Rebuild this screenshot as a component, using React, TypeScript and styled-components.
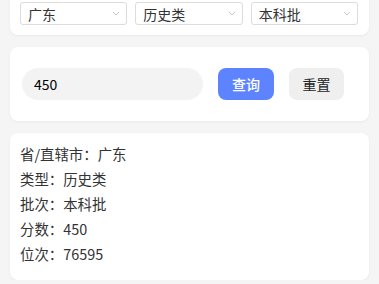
import styled, { createGlobalStyle } from "styled-components";

const GlobalStyle = createGlobalStyle`
  html, body {
    margin: 0;
    padding: 0;
    background: #f5f5f5;
    font-family: "Noto Sans CJK SC", "Noto Sans", sans-serif;
    color: #333;
  }
`;

const Page = styled.div`
  display: flex;
  flex-direction: column;
  gap: 12px;
  padding: 0 10px;
  margin-top: -8px;
`;

const Card = styled.div<{ $pad: string }>`
  background: #fff;
  border-radius: 8px;
  padding: ${({ $pad }) => $pad};
  box-shadow: 0 1px 3px rgba(0, 0, 0, 0.05);
`;

const SelectRow = styled.div`
  display: flex;
  gap: 8px;
`;

const Select = styled.div`
  flex: 1;
  height: 23px;
  box-sizing: border-box;
  border: 1px solid #dcdcdc;
  border-radius: 3px;
  display: flex;
  align-items: center;
  justify-content: space-between;
  padding: 0 6px 0 7px;
  font-size: 14px;
  color: #333;
`;

const Chevron = () => (
  <svg width="8" height="5" viewBox="0 0 8 5">
    <path d="M1 1l3 3 3-3" fill="none" stroke="#c8c8c8" strokeWidth="1" />
  </svg>
);

const SearchRow = styled.div`
  display: flex;
  align-items: center;
`;

const Input = styled.div`
  width: 181px;
  height: 32px;
  box-sizing: border-box;
  border-radius: 16px;
  background: #f3f3f3;
  display: flex;
  align-items: center;
  padding-left: 12px;
  font-size: 14px;
  color: #000;
`;

const Button = styled.div<{ $primary?: boolean }>`
  width: ${({ $primary }) => ($primary ? "56px" : "55px")};
  height: 32px;
  margin-left: 15px;
  border-radius: 8px;
  display: flex;
  align-items: center;
  justify-content: center;
  font-size: 14px;
  font-weight: ${({ $primary }) => ($primary ? 500 : 400)};
  background: ${({ $primary }) => ($primary ? "#5d83ff" : "#efefef")};
  color: ${({ $primary }) => ($primary ? "#fff" : "#222")};
`;

const InfoLine = styled.div`
  font-size: 14.4px;
  line-height: 25px;
  color: #333;
`;

const info = [
  ["省/直辖市", "广东"],
  ["类型", "历史类"],
  ["批次", "本科批"],
  ["分数", "450"],
  ["位次", "76595"],
];

export default function App() {
  return (
    <>
      <GlobalStyle />
      <Page>
        <Card $pad="10px 11px 10px 10px">
          <SelectRow>
            {["广东", "历史类", "本科批"].map((v) => (
              <Select key={v}>
                <span>{v}</span>
                <Chevron />
              </Select>
            ))}
          </SelectRow>
        </Card>
        <Card $pad="21px 12px">
          <SearchRow>
            <Input>450</Input>
            <Button $primary>查询</Button>
            <Button>重置</Button>
          </SearchRow>
        </Card>
        <Card $pad="8px 10px 14px">
          {info.map(([k, v]) => (
            <InfoLine key={k}>
              {k}：{v}
            </InfoLine>
          ))}
        </Card>
      </Page>
    </>
  );
}
